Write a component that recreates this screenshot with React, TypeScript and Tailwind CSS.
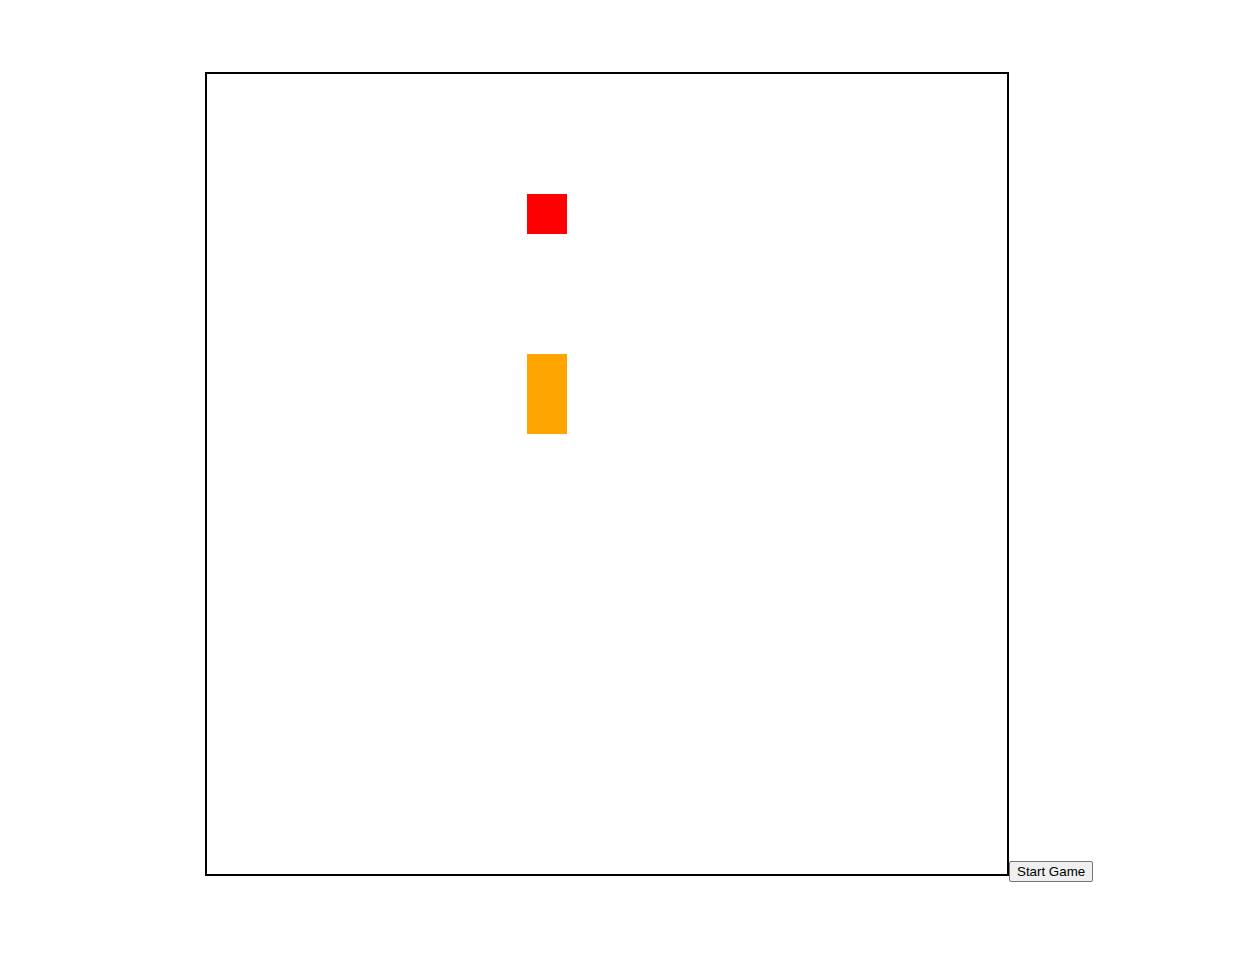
import React from 'react';

type Cell = { x: number; y: number; color: string };

const food: Cell = { x: 8, y: 3, color: 'bg-[#ff0000]' };
const snake: Cell[] = [
  { x: 8, y: 7, color: 'bg-[#ffa500]' },
  { x: 8, y: 8, color: 'bg-[#ffa500]' },
];

export default function App() {
  const cells = [food, ...snake];

  return (
    <div className="min-h-[976px] bg-white pt-[72px] pl-[205px] font-['Liberation_Sans',Arial,sans-serif]">
      <div className="relative inline-block h-[804px] w-[804px] border-2 border-black align-baseline">
        {cells.map((c, i) => (
          <div
            key={i}
            className={`absolute h-[40px] w-[40px] ${c.color}`}
            style={{ left: c.x * 40, top: c.y * 40 }}
          />
        ))}
      </div>
      <button className="rounded-[2px] border border-[#767676] bg-[#efefef] px-[7px] py-[2px] align-baseline text-[13.333px] leading-[15px] text-black">
        Start Game
      </button>
    </div>
  );
}
